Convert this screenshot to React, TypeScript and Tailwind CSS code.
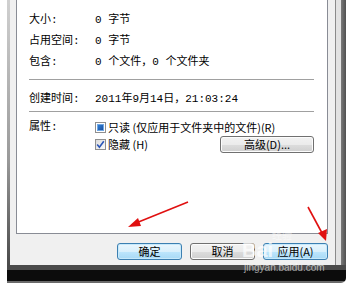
import React from "react";

const font = { fontFamily: '"Liberation Mono", "Noto Sans CJK SC", monospace' };
const cjk = { fontFamily: '"Noto Sans CJK SC", sans-serif' };

function Row({ label, value }: { label: string; value: string }) {
  return (
    <div className="grid grid-cols-[66px_1fr] h-[21px] leading-[21px]">
      <span>{label}</span>
      <span>{value}</span>
    </div>
  );
}

function Separator() {
  return (
    <div>
      <div className="h-px bg-[#a0a0a0]" />
      <div className="h-px bg-white" />
    </div>
  );
}

function WinButton({ label, blue }: { label: string; blue?: boolean }) {
  return (
    <div
      style={cjk}
      className={
        blue
          ? "w-[65px] h-[17px] rounded-[3px] border border-[#3c7fb1] bg-[linear-gradient(to_bottom,#eaf6fd_0%,#d9f0fc_50%,#bee6fd_50%,#a7d9f5_100%)] shadow-[inset_0_0_0_1px_#c7e9fb] flex items-center justify-center text-[11px] leading-none"
          : "w-[65px] h-[17px] rounded-[3px] border border-[#707070] bg-[linear-gradient(to_bottom,#f2f2f2_0%,#ebebeb_50%,#dddddd_50%,#cfcfcf_100%)] shadow-[inset_0_0_0_1px_#fcfcfc] flex items-center justify-center text-[11px] leading-none"
      }
    >
      {label}
    </div>
  );
}

export default function App() {
  return (
    <div className="relative w-[349px] h-[289px] bg-white overflow-hidden text-[11px] text-black" style={font}>
      {/* window frame */}
      <div className="ml-[7px] w-[339px] h-[283px] flex flex-col">
        <div className="flex h-[265px]">
          <div className="w-[3px] bg-[linear-gradient(to_bottom,#d0d0d0,#9a9a9a_60%,#4a4a4a)]" />
          {/* dialog client area */}
          <div className="w-[325px] bg-[#f0f0f0] pl-[6px] pr-[7px] flex flex-col">
            {/* tab panel */}
            <div className="h-[234px] bg-white border-x border-b border-[#898c95] pl-[12px] pr-[13px] pt-[10px]">
              <Row label="大小:" value="0 字节" />
              <Row label="占用空间:" value="0 字节" />
              <Row label="包含:" value="0 个文件，0 个文件夹" />
              <div className="mt-[6px]">
                <Separator />
              </div>
              <div className="mt-[8px]">
                <Row label="创建时间:" value="2011年9月14日，21:03:24" />
              </div>
              <div className="mt-[1px]">
                <Separator />
              </div>
              <div className="mt-[6px] grid grid-cols-[66px_1fr]">
                <span className="leading-[17px]">属性:</span>
                <div className="flex flex-col" style={cjk}>
                  <div className="h-[17px] flex items-center gap-[2px]">
                    <span className="w-[11px] h-[11px] border border-[#8f8f8f] bg-white p-[1px] flex">
                      <span className="flex-1 bg-[linear-gradient(to_bottom_right,#2f80d8,#1c4f9c)] border border-[#6fa7e4]" />
                    </span>
                    <span>只读 (仅应用于文件夹中的文件)(R)</span>
                  </div>
                  <div className="h-[17px] flex items-center justify-between">
                    <div className="flex items-center gap-[2px]">
                      <span className="w-[11px] h-[11px] border border-[#8f8f8f] bg-[linear-gradient(to_bottom_right,#dcdcdc,#fafafa)] flex items-center justify-center">
                        <svg width="9" height="9" viewBox="0 0 9 9">
                          <path d="M1.2 4.6 L3.4 7.2 L7.8 1.2" fill="none" stroke="#2a55b8" strokeWidth="1.6" />
                        </svg>
                      </span>
                      <span>隐藏 (H)</span>
                    </div>
                    <div className="w-[94px] h-[17px] rounded-[3px] border border-[#707070] bg-[linear-gradient(to_bottom,#f2f2f2_0%,#ebebeb_50%,#dddddd_50%,#cfcfcf_100%)] shadow-[inset_0_0_0_1px_#fcfcfc] flex items-center justify-center leading-none">
                      高级(D)...
                    </div>
                  </div>
                </div>
              </div>
            </div>
            {/* buttons */}
            <div className="mt-[9px] flex justify-end gap-[8px]">
              <WinButton label="确定" blue />
              <WinButton label="取消" />
              <WinButton label="应用(A)" blue />
            </div>
          </div>
          <div className="w-[11px] flex">
            <div className="w-px bg-[#8a8a8a]" />
            <div className="w-[5px] bg-[#e2e2e2]" />
            <div className="w-[5px] bg-[linear-gradient(to_right,#7a7a7a,#505050)]" />
          </div>
        </div>
        <div className="h-[18px] flex flex-col rounded-br-[5px] overflow-hidden">
          <div className="h-[5px] bg-[#4a4a4a]" />
          <div className="h-[11px] bg-[#0c0c0c]" />
          <div className="h-[2px] bg-[#6a6a6a]" />
        </div>
      </div>

      {/* red arrows */}
      <svg className="absolute inset-0 pointer-events-none" width="349" height="289" viewBox="0 0 349 289">
        <line x1="188" y1="202" x2="136" y2="223" stroke="#e01010" strokeWidth="1.6" />
        <polygon points="128,227 138,218 141,226" fill="#e01010" />
        <line x1="308" y1="207" x2="322" y2="233" stroke="#e01010" strokeWidth="1.6" />
        <polygon points="326,241 318,233 327,229" fill="#e01010" />
      </svg>

      {/* watermark */}
      <div className="absolute left-[242px] top-[240px] text-[20px] font-bold leading-none text-white/70 pointer-events-none" style={{ fontFamily: '"Liberation Sans", sans-serif' }}>
        Bai
      </div>
      <div className="absolute left-[272px] top-[230px] text-[10px] leading-none text-white/50 pointer-events-none" style={cjk}>
        经验
      </div>
      <div className="absolute left-[244px] top-[263px] text-[10px] leading-none text-white/60 pointer-events-none" style={{ fontFamily: '"Liberation Sans", sans-serif' }}>
        jingyan.baidu.com
      </div>
    </div>
  );
}
